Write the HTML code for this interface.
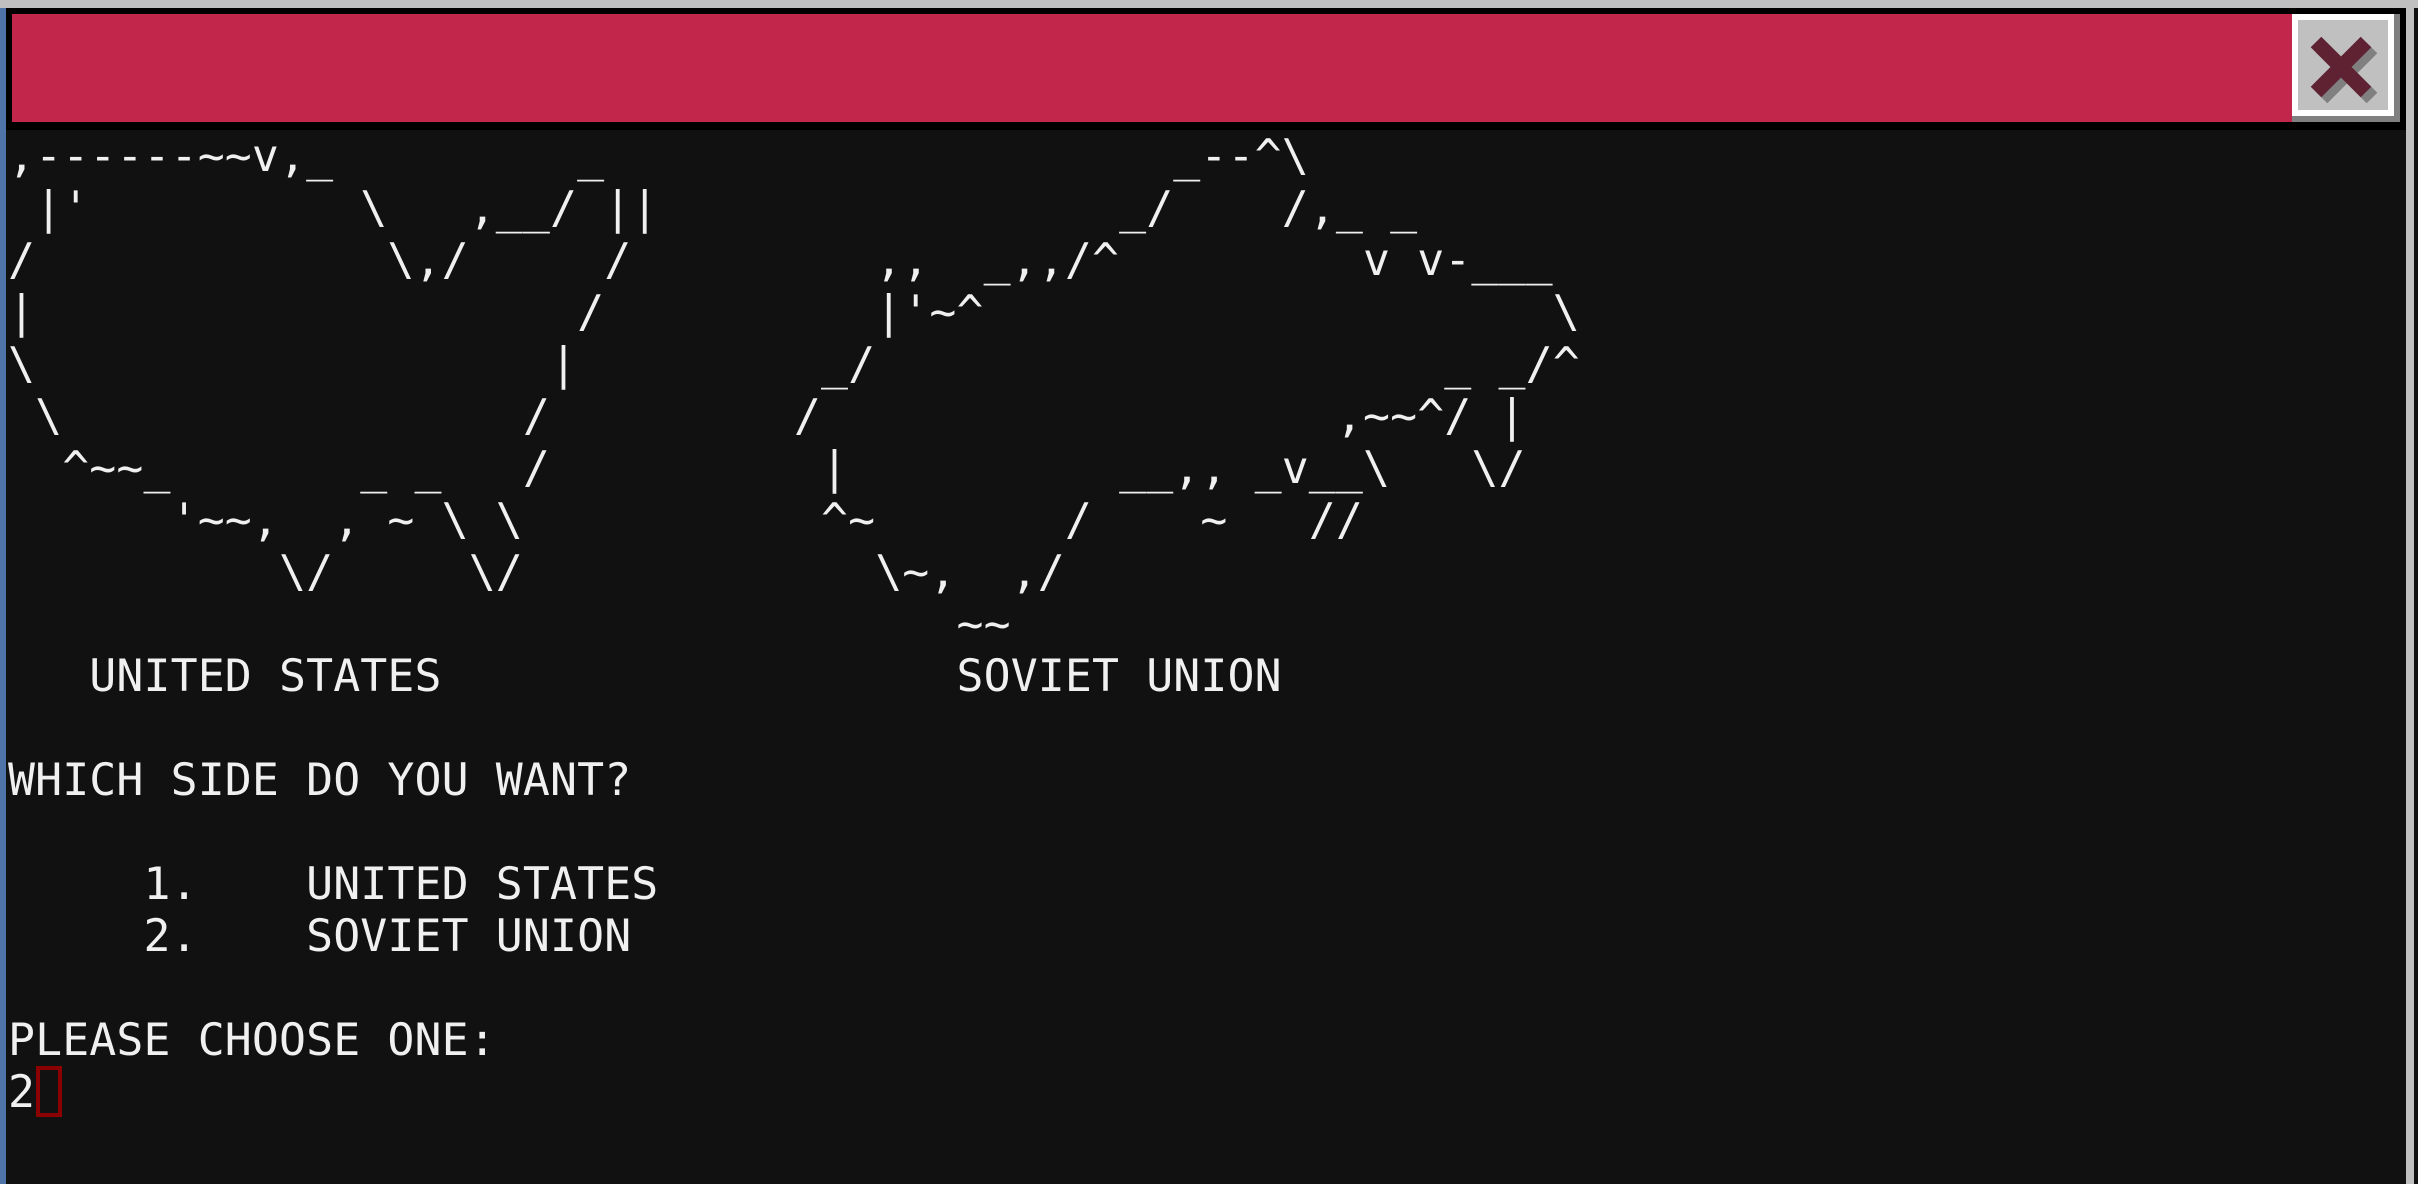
<!DOCTYPE html>
<html><head><meta charset="utf-8"><style>
html,body{margin:0;padding:0;width:2418px;height:1184px;overflow:hidden;background:#111;}
#top{position:absolute;left:0;top:0;width:2418px;height:8px;background:#c0c0c0;}
#blue{position:absolute;left:0;top:8px;width:6px;height:1176px;background:#4f74a8;}
#rg{position:absolute;left:2406px;top:0;width:8px;height:1184px;background:#c0c0c0;}
#rd{position:absolute;left:2414px;top:8px;width:4px;height:1176px;background:#111;}
#bar{position:absolute;left:6px;top:8px;width:2400px;height:122px;background:#000;}
#red{position:absolute;left:12px;top:14px;width:2280px;height:108px;background:#c2264b;}
#btn{position:absolute;left:2292px;top:14px;width:108px;height:108px;background:#808080;}
#btnw{position:absolute;left:0;top:0;width:102px;height:102px;background:#fff;}
#btnf{position:absolute;left:6px;top:6px;width:90px;height:90px;background:#c0c0c0;}
pre{position:absolute;left:8px;top:130px;margin:0;font-family:"DejaVu Sans Mono",monospace;font-size:44.8px;line-height:52px;letter-spacing:0.13px;color:#f0f0f0;}
#cur{position:absolute;left:36px;top:1066px;width:18px;height:43px;border:4px solid #8b0000;}
</style></head><body>
<div id="top"></div><div id="blue"></div><div id="rg"></div><div id="rd"></div>
<div id="bar"></div><div id="red"></div>
<div id="btn"><div id="btnw"></div><div id="btnf"></div>
<svg style="position:absolute;left:0;top:0" width="108" height="108" viewBox="0 0 108 108">
<path d="M26 30 L76 80 M76 30 L26 80" stroke="#808080" stroke-width="15" transform="translate(4,4)"/>
<path d="M24 28 L74 78 M74 28 L24 78" stroke="#5e2233" stroke-width="15"/>
</svg></div>
<pre>,------~~v,_         _                     _--^\
 |'          \   ,__/ ||                 _/    /,_ _
/             \,/     /         ,,  _,,/^         v v-___
|                    /          |'~^                     \
\                   |         _/                     _ _/^
 \                 /         /                   ,~~^/ |
  ^~~_       _ _   /          |          __,, _v__\   \/
      '~~,  , ~ \ \           ^~       /    ~   //
          \/     \/             \~,  ,/
                                   ~~
   UNITED STATES                   SOVIET UNION

WHICH SIDE DO YOU WANT?

     1.    UNITED STATES
     2.    SOVIET UNION

PLEASE CHOOSE ONE:
2</pre>
<div id="cur"></div>
</body></html>
